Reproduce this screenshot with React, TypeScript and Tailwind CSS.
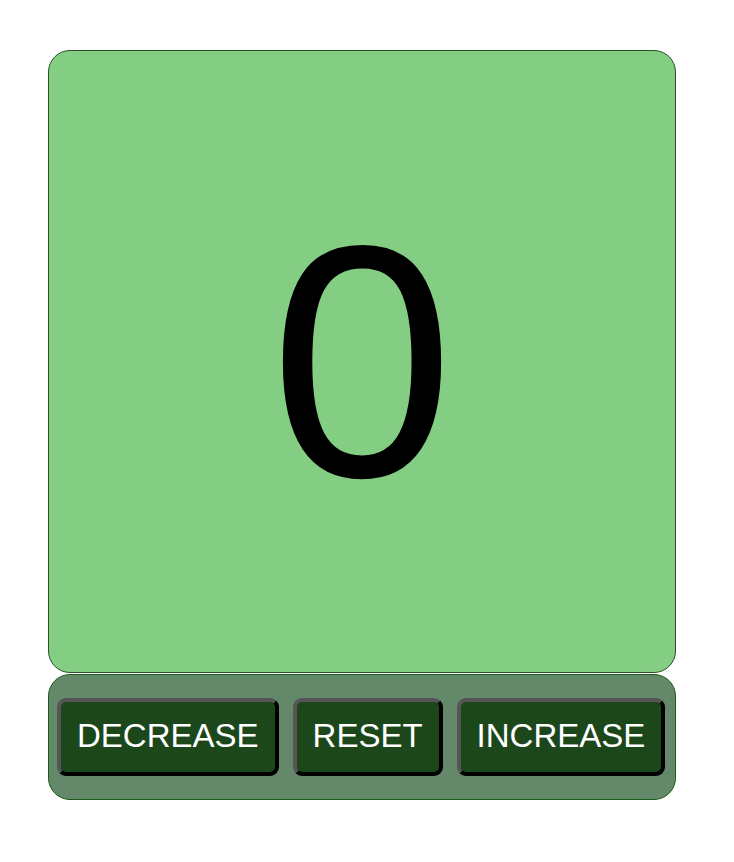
export default function App() {
  return (
    <div className="ml-12 mt-[50px] w-[628px] font-['Liberation_Sans',Arial,sans-serif]">
      <div className="flex h-[623px] items-center justify-center rounded-[22px] border-[1.5px] border-[#2a4f2a] bg-[#84ce84]">
        <span className="text-[331px] leading-none text-black">0</span>
      </div>
      <div className="mt-[1px] flex h-[126px] items-center gap-[14px] rounded-[22px] border-[1.5px] border-[#1d5a14] bg-[#64896a] px-[8px]">
        {['DECREASE', 'RESET', 'INCREASE'].map((label) => (
          <button
            key={label}
            className="h-[78px] rounded-[9px] border-4 border-t-[#555] border-l-[#555] border-r-black border-b-black bg-[#1c471b] px-4 pb-[3px] text-[33px] leading-none text-white"
          >
            {label}
          </button>
        ))}
      </div>
    </div>
  )
}
